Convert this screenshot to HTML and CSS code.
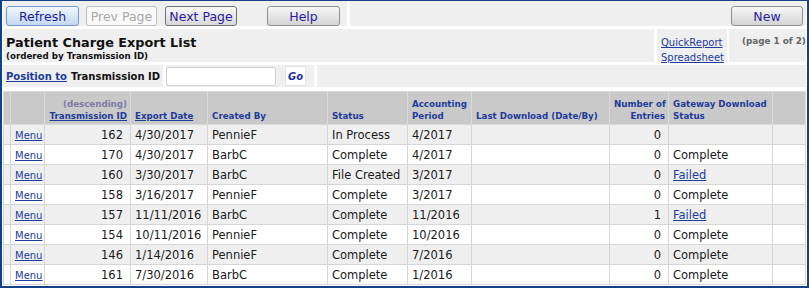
FILE: index.html
```html
<!DOCTYPE html>
<html>
<head>
    <meta charset="UTF-8">
    <title>Patient Charge Export List</title>
    <link rel="stylesheet" href="styles.css">
</head>
<body>
<div class="frame">
    <div class="bar toolbar">
        <div class="cell tools-left">
            <button class="btn btn-blue">Refresh</button>
            <button class="btn btn-off" disabled>Prev Page</button>
            <button class="btn btn-dark">Next Page</button>
            <button class="btn btn-help">Help</button>
        </div>
        <div class="cell tools-right">
            <button class="btn btn-help">New</button>
        </div>
    </div>

    <div class="bar titlebar">
        <div class="cell title">
            <h1>Patient Charge Export List</h1>
            <div class="sub">(ordered by Transmission ID)</div>
        </div>
        <div class="cell links">
            <a href="#">QuickReport</a>
            <a href="#">Spreadsheet</a>
        </div>
        <div class="cell pageinfo">(page 1 of 2)</div>
    </div>

    <div class="bar posbar">
        <div class="cell poslabel"><a href="#">Position to</a> Transmission ID</div>
        <div class="cell posinput">
            <input type="text" class="posfield">
            <button class="go">Go</button>
        </div>
        <div class="cell fill"></div>
    </div>

    <table class="list">
        <colgroup>
            <col style="width:7px">
            <col style="width:34px">
            <col style="width:86px">
            <col style="width:77px">
            <col style="width:120px">
            <col style="width:80px">
            <col style="width:64px">
            <col style="width:138px">
            <col style="width:59px">
            <col style="width:104px">
            <col>
        </colgroup>
        <thead>
            <tr>
                <th></th>
                <th></th>
                <th class="num"><span class="desc">(descending)</span><br><a href="#">Transmission ID</a></th>
                <th><a href="#">Export Date</a></th>
                <th>Created By</th>
                <th>Status</th>
                <th>Accounting<br>Period</th>
                <th>Last Download (Date/By)</th>
                <th class="num">Number of<br>Entries</th>
                <th>Gateway Download<br>Status</th>
                <th></th>
            </tr>
        </thead>
        <tbody>
            <tr class="alt">
                <td></td><td><a class="menu" href="#">Menu</a></td>
                <td class="num">162</td><td>4/30/2017</td><td>PennieF</td><td>In Process</td><td>4/2017</td><td></td><td class="num">0</td><td></td><td></td>
            </tr>
            <tr>
                <td></td><td><a class="menu" href="#">Menu</a></td>
                <td class="num">170</td><td>4/30/2017</td><td>BarbC</td><td>Complete</td><td>4/2017</td><td></td><td class="num">0</td><td>Complete</td><td></td>
            </tr>
            <tr class="alt">
                <td></td><td><a class="menu" href="#">Menu</a></td>
                <td class="num">160</td><td>3/30/2017</td><td>BarbC</td><td>File Created</td><td>3/2017</td><td></td><td class="num">0</td><td><a href="#">Failed</a></td><td></td>
            </tr>
            <tr>
                <td></td><td><a class="menu" href="#">Menu</a></td>
                <td class="num">158</td><td>3/16/2017</td><td>PennieF</td><td>Complete</td><td>3/2017</td><td></td><td class="num">0</td><td>Complete</td><td></td>
            </tr>
            <tr class="alt">
                <td></td><td><a class="menu" href="#">Menu</a></td>
                <td class="num">157</td><td>11/11/2016</td><td>BarbC</td><td>Complete</td><td>11/2016</td><td></td><td class="num">1</td><td><a href="#">Failed</a></td><td></td>
            </tr>
            <tr>
                <td></td><td><a class="menu" href="#">Menu</a></td>
                <td class="num">154</td><td>10/11/2016</td><td>PennieF</td><td>Complete</td><td>10/2016</td><td></td><td class="num">0</td><td>Complete</td><td></td>
            </tr>
            <tr class="alt">
                <td></td><td><a class="menu" href="#">Menu</a></td>
                <td class="num">146</td><td>1/14/2016</td><td>PennieF</td><td>Complete</td><td>7/2016</td><td></td><td class="num">0</td><td>Complete</td><td></td>
            </tr>
            <tr>
                <td></td><td><a class="menu" href="#">Menu</a></td>
                <td class="num">161</td><td>7/30/2016</td><td>BarbC</td><td>Complete</td><td>1/2016</td><td></td><td class="num">0</td><td>Complete</td><td></td>
            </tr>
        </tbody>
    </table>
</div>
</body>
</html>
```

FILE: styles.css
```css
body {
    margin: 0;
    background: #fff;
    font-family: "DejaVu Sans", Verdana, sans-serif;
    color: #1a1a1a;
}
a {
    color: #1c3c9e;
}
.frame {
    width: 803px;
    height: 284px;
    border: 2px solid #114285;
    border-top-width: 1px;
    padding: 0 1px 1px 1px;
    display: flex;
    flex-direction: column;
    gap: 3px;
    overflow: hidden;
}
.bar {
    display: flex;
    gap: 3px;
}
.cell {
    background: #efefef;
}

/* toolbar */
.toolbar {
    height: 26px;
}
.tools-left {
    width: 344px;
    display: flex;
    align-items: flex-start;
    padding: 5px 0 0 3px;
    box-sizing: border-box;
    gap: 7px;
}
.tools-right {
    flex: 1;
    display: flex;
    align-items: flex-start;
    justify-content: flex-end;
    padding: 5px 3px 0 0;
}
.btn {
    width: 72px;
    height: 20px;
    padding: 0;
    font-family: "DejaVu Sans", Verdana, sans-serif;
    font-size: 12.5px;
    border-radius: 3px;
    border: 1px solid #8a8a8a;
    color: #2a1c9c;
    background: linear-gradient(#f8f8f8, #d8d8d8);
    cursor: pointer;
}
.btn-blue {
    width: 73px;
    border-color: #6f98cc;
    background: linear-gradient(#f2f7fd, #c3d8f1);
    color: #1e1e9a;
}
.btn-off {
    width: 71px;
    border-color: #bdbdbd;
    background: #f9f9f9;
    color: #a8a8a8;
}
.btn-dark {
    border-color: #707070;
    margin-left: 1px;
}
.btn-help {
    width: 73px;
    margin-left: 23px;
    border-color: #909090;
    background: linear-gradient(#f6f6f6, #d4d4d4);
}
.tools-right .btn-help {
    width: 72px;
    margin-left: 0;
}

/* title row */
.titlebar {
    height: 33px;
}
.title {
    flex: 1;
    padding: 7px 0 0 3px;
}
.title h1 {
    margin: 0;
    font-size: 12.8px;
    line-height: 14px;
    color: #111;
}
.title .sub {
    font-size: 8.7px;
    font-weight: bold;
    line-height: 12px;
    color: #111;
}
.links {
    width: 66px;
    padding: 6px 0 0 4px;
    display: flex;
    flex-direction: column;
    font-size: 10px;
    line-height: 15px;
}
.pageinfo {
    width: 64px;
    padding: 7px 0 0 13px;
    font-size: 8.8px;
    font-weight: bold;
    color: #666;
}
.titlebar .pageinfo {
    margin-left: -1px;
}

/* position row */
.posbar {
    height: 23px;
}
.poslabel {
    width: 157px;
    padding-left: 3px;
    display: flex;
    align-items: center;
    gap: 4px;
    font-size: 10px;
    font-weight: bold;
    color: #111;
}
.posinput {
    width: 148px;
    display: flex;
    align-items: center;
    gap: 9px;
}
.posfield {
    width: 110px;
    height: 19px;
    box-sizing: border-box;
    border: 1px solid #d0d0d0;
    border-radius: 3px;
    background: #fff;
    margin: 0;
}
.go {
    width: 21px;
    height: 20px;
    padding: 0;
    border: 1px solid #e4e4e4;
    background: #fff;
    font-family: "DejaVu Sans", Verdana, sans-serif;
    font-size: 10px;
    font-weight: bold;
    font-style: italic;
    color: #1c2fa0;
}
.fill {
    flex: 1;
}

/* list table */
.list {
    width: 803px;
    table-layout: fixed;
    border-collapse: collapse;
    margin-top: 1px;
}
.list th,
.list td {
    border: 1px solid #d6d6d6;
    padding: 0 3px 0 4px;
    white-space: nowrap;
    overflow: hidden;
}
.list th {
    height: 30px;
    background: #c9c9c9;
    border-color: #dadada;
    vertical-align: bottom;
    text-align: left;
    font-size: 8.7px;
    line-height: 12px;
    padding-bottom: 2px;
    color: #1e3a9a;
}
.list th a {
    color: #1e3a9a;
}
.list th .desc {
    color: #7c7aa8;
}
.list td {
    height: 19px;
    font-size: 11.5px;
    background: #fff;
}
.list tr.alt td {
    background: #efefef;
}
.list .num {
    text-align: right;
}
.list td.num {
    padding-right: 7px;
}
.list td .menu {
    font-size: 10px;
}
```
